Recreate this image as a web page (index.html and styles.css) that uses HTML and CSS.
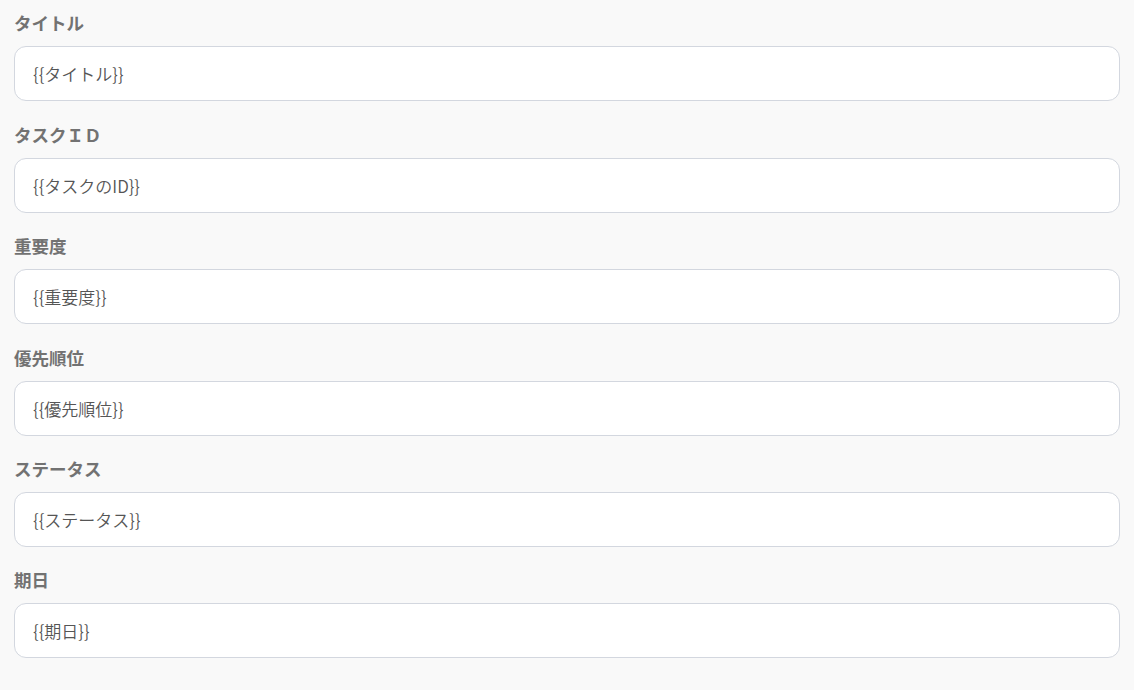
FILE: index.html
```html
<!DOCTYPE html>
<html lang="ja">
<head>
<meta charset="utf-8">
<title>Form</title>
<link rel="stylesheet" href="styles.css">
</head>
<body>
<form class="form">
  <div class="field">
    <label class="label">タイトル</label>
    <div class="input">{{タイトル}}</div>
  </div>
  <div class="field">
    <label class="label">タスクＩＤ</label>
    <div class="input">{{タスクのID}}</div>
  </div>
  <div class="field">
    <label class="label">重要度</label>
    <div class="input">{{重要度}}</div>
  </div>
  <div class="field">
    <label class="label">優先順位</label>
    <div class="input">{{優先順位}}</div>
  </div>
  <div class="field">
    <label class="label">ステータス</label>
    <div class="input">{{ステータス}}</div>
  </div>
  <div class="field">
    <label class="label">期日</label>
    <div class="input">{{期日}}</div>
  </div>
</form>
</body>
</html>
```

FILE: styles.css
```css
html, body {
  margin: 0;
  padding: 0;
  background: #f9f9f9;
}
body {
  font-family: "Noto Sans CJK JP", "Noto Sans", sans-serif;
  padding: 11.4px 14px 0 14px;
}
.form {
  display: flex;
  flex-direction: column;
  gap: 21.4px;
}
.field {
  display: flex;
  flex-direction: column;
}
.label {
  font-size: 17.5px;
  line-height: 24px;
  font-weight: 700;
  color: #727272;
  margin-bottom: 11px;
}
.input {
  box-sizing: border-box;
  height: 55px;
  background: #ffffff;
  border: 1px solid #d3d7df;
  border-radius: 12px;
  padding: 0 18px;
  display: flex;
  align-items: center;
  font-size: 17px;
  font-weight: 350;
  color: #555555;
}
```
